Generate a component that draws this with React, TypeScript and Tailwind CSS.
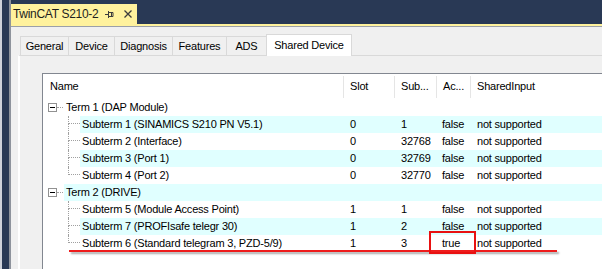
import React from 'react';

type Row = {
  name: string;
  level: 0 | 1;
  last?: boolean;
  slot?: string;
  sub?: string;
  ac?: string;
  shared?: string;
};

const rows: Row[] = [
  { name: 'Term 1 (DAP Module)', level: 0 },
  { name: 'Subterm 1 (SINAMICS S210 PN V5.1)', level: 1, slot: '0', sub: '1', ac: 'false', shared: 'not supported' },
  { name: 'Subterm 2 (Interface)', level: 1, slot: '0', sub: '32768', ac: 'false', shared: 'not supported' },
  { name: 'Subterm 3 (Port 1)', level: 1, slot: '0', sub: '32769', ac: 'false', shared: 'not supported' },
  { name: 'Subterm 4 (Port 2)', level: 1, last: true, slot: '0', sub: '32770', ac: 'false', shared: 'not supported' },
  { name: 'Term 2 (DRIVE)', level: 0 },
  { name: 'Subterm 5 (Module Access Point)', level: 1, slot: '1', sub: '1', ac: 'false', shared: 'not supported' },
  { name: 'Subterm 7 (PROFIsafe telegr 30)', level: 1, slot: '1', sub: '2', ac: 'false', shared: 'not supported' },
  { name: 'Subterm 6 (Standard telegram 3, PZD-5/9)', level: 1, last: true, slot: '1', sub: '3', ac: 'true', shared: 'not supported' },
];

const tabs = [
  { label: 'General', w: 'w-[48px]' },
  { label: 'Device', w: 'w-[46px]' },
  { label: 'Diagnosis', w: 'w-[58px]' },
  { label: 'Features', w: 'w-[54px]' },
  { label: 'ADS', w: 'w-[40px]' },
];

const PinIcon = () => (
  <svg width="9" height="8" viewBox="0 0 9 8" className="text-[#3d3d3d]">
    <path d="M0 4.5h3M3.5 1v7M3.5 2.5h4.5v4h-4.5M6.5 2.5v4" stroke="currentColor" fill="none" strokeWidth="1" />
  </svg>
);

const CloseIcon = () => (
  <svg width="8" height="8" viewBox="0 0 8 8" className="text-[#3d3d3d]">
    <path d="M0.5 0.5l7 7M7.5 0.5l-7 7" stroke="currentColor" strokeWidth="1.3" fill="none" />
  </svg>
);

const TreeRow: React.FC<{ row: Row; idx: number }> = ({ row, idx }) => {
  const cyan = idx % 2 === 1;
  const bg = cyan ? 'bg-[#e0ffff]' : 'bg-white';
  return (
    <div className="flex h-[17px] items-stretch">
      {row.level === 0 ? (
        <div className="flex w-[21px] shrink-0 items-center pl-[5px]">
          <div className="flex h-[9px] w-[9px] items-center justify-center border border-[#919191] bg-white">
            <div className="h-px w-[5px] bg-black" />
          </div>
          <div className="h-0 w-[6px] border-t border-dotted border-[#a0a0a0]" />
        </div>
      ) : (
        <div className="flex w-[37px] shrink-0">
          <div className="w-[25px]" />
          <div className="flex w-[12px] flex-col">
            <div className="h-[8px] border-b border-l border-dotted border-[#a0a0a0]" />
            <div className={row.last ? 'flex-1' : 'flex-1 border-l border-dotted border-[#a0a0a0]'} />
          </div>
        </div>
      )}
      <div className={`flex flex-1 items-center ${bg}`}>
        <div className={`${row.level === 0 ? 'w-[279px]' : 'w-[263px]'} shrink-0 whitespace-nowrap pl-[2px]`}>{row.name}</div>
        <div className="w-[51px] shrink-0 border-l border-transparent pl-[6px]">{row.slot}</div>
        <div className="w-[42px] shrink-0 border-l border-transparent pl-[6px]">{row.sub}</div>
        <div className="w-[34px] shrink-0 border-l border-transparent pl-[5px]">{row.ac}</div>
        <div className="flex-1 whitespace-nowrap border-l border-transparent pl-[6px]">{row.shared}</div>
      </div>
    </div>
  );
};

export default function App() {
  return (
    <div className="relative flex h-[269px] w-[602px] overflow-hidden bg-[#293955] font-['Liberation_Sans',Arial,sans-serif] text-[11px] leading-none tracking-[-0.2px] text-black">
      <div className="w-[2px] shrink-0 bg-[#cfd2da]" />
      <div className="w-[7px] shrink-0" />
      <div className="w-[2px] shrink-0 bg-[#8e939c]" />

      <div className="flex min-w-0 flex-1 flex-col">
        {/* document tab */}
        <div className="flex h-[24px] shrink-0 items-end">
          <div className="flex h-[20px] w-[126px] items-center bg-[#fff29d] pl-[2px] text-[12px] tracking-[-0.3px] text-[#1e1e1e]">
            <span className="w-[92px] whitespace-nowrap">TwinCAT S210-2</span>
            <span className="flex w-[19px] items-center">
              <PinIcon />
            </span>
            <CloseIcon />
          </div>
        </div>
        <div className="h-[2px] shrink-0 bg-[#fff29d]" />
        <div className="h-px shrink-0 bg-[#9ba0a8]" />

        {/* document body */}
        <div className="flex flex-1 flex-col bg-[#f0f0f0]">
          <div className="flex h-[28px] shrink-0 items-end pl-[9px]">
            {tabs.map((t) => (
              <div
                key={t.label}
                className={`${t.w} flex h-[19px] items-center justify-center border-l border-t border-[#d9d9d9] bg-[#f0f0f0] pt-[1px]`}
              >
                {t.label}
              </div>
            ))}
            <div className="relative z-10 -mb-px flex h-[22px] w-[86px] items-center justify-center border border-b-0 border-[#d9d9d9] bg-white pb-[1px]">
              Shared Device
            </div>
          </div>

          <div className="ml-[7px] flex flex-1 flex-col border-l-2 border-t border-l-white border-t-[#d9d9d9] pl-[22px] pt-[17px]">
            {/* list view */}
            <div className="flex flex-1 flex-col border-l border-t border-[#828790] bg-white">
              <div className="flex h-[25px] shrink-0 items-center">
                <div className="w-[300px] shrink-0 pl-[7px]">Name</div>
                <div className="flex h-[22px] w-[51px] shrink-0 items-center border-l border-[#e5e5e5] pl-[6px]">Slot</div>
                <div className="flex h-[22px] w-[42px] shrink-0 items-center border-l border-[#e5e5e5] pl-[6px]">Sub...</div>
                <div className="flex h-[22px] w-[34px] shrink-0 items-center border-l border-[#e5e5e5] pl-[6px]">Ac...</div>
                <div className="flex h-[22px] flex-1 items-center border-l border-[#e5e5e5] pl-[6px]">SharedInput</div>
              </div>
              {rows.map((r, i) => (
                <TreeRow key={r.name} row={r} idx={i} />
              ))}
            </div>
          </div>
        </div>
      </div>

      {/* annotations */}
      <div className="absolute left-[69px] top-[250px] h-[2px] w-[488px] bg-[#ee1c1c] shadow-[2px_2px_2px_rgba(0,0,0,0.35)]" />
      <div className="absolute left-[429px] top-[231px] h-[23px] w-[47px] border-2 border-[#e81111]" />
    </div>
  );
}
